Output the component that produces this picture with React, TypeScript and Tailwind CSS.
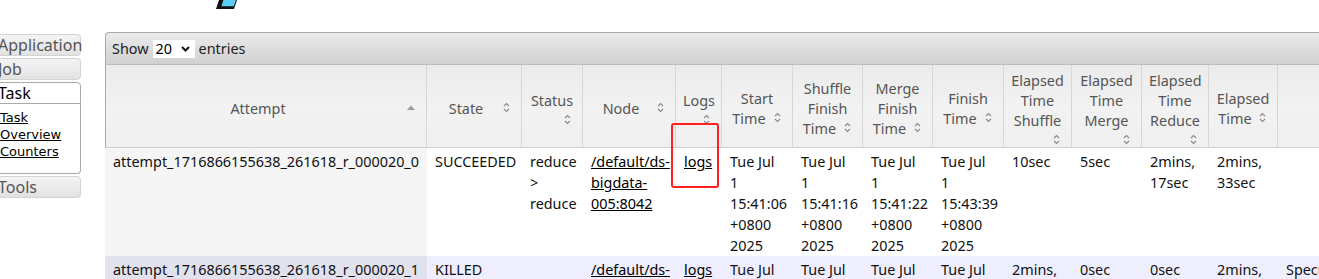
import React from "react";

type Col = { label: string; w: number; sort?: "asc" | "both" | "none" };

const cols: Col[] = [
    { label: "Attempt", w: 322, sort: "asc" },
    { label: "State", w: 95 },
    { label: "Status", w: 61 },
    { label: "Node", w: 93 },
    { label: "Logs", w: 46 },
    { label: "Start Time", w: 71 },
    { label: "Shuffle Finish Time", w: 70 },
    { label: "Merge Finish Time", w: 70 },
    { label: "Finish Time", w: 71 },
    { label: "Elapsed Time Shuffle", w: 68 },
    { label: "Elapsed Time Merge", w: 70 },
    { label: "Elapsed Time Reduce", w: 67 },
    { label: "Elapsed Time", w: 69 },
    { label: "Note", w: 420, sort: "none" },
];

const rows = [
    {
        attempt: "attempt_1716866155638_261618_r_000020_0",
        state: "SUCCEEDED",
        status: "reduce > reduce",
        node: "/default/ds-bigdata-005:8042",
        start: "Tue Jul 1 15:41:06 +0800 2025",
        shuffle: "Tue Jul 1 15:41:16 +0800 2025",
        merge: "Tue Jul 1 15:41:22 +0800 2025",
        finish: "Tue Jul 1 15:43:39 +0800 2025",
        eShuffle: "10sec",
        eMerge: "5sec",
        eReduce: "2mins, 17sec",
        elapsed: "2mins, 33sec",
        note: "",
    },
    {
        attempt: "attempt_1716866155638_261618_r_000020_1",
        state: "KILLED",
        status: "",
        node: "/default/ds-bigdata-011:8042",
        start: "Tue Jul 1 15:41:37 +0800 2025",
        shuffle: "Tue Jul 1 15:43:44 +0800 2025",
        merge: "Tue Jul 1 15:43:44 +0800 2025",
        finish: "Tue Jul 1 15:43:44 +0800 2025",
        eShuffle: "2mins, 7sec",
        eMerge: "0sec",
        eReduce: "0sec",
        elapsed: "2mins, 7sec",
        note: "Speculation: attempt_1716866155638_261618_r_000020_0 succeeded first!",
    },
];

const SortIcon = ({ kind }: { kind: "asc" | "both" }) => (
    <span className="float-right w-4 h-4 flex items-center justify-center">
        {kind === "asc" ? (
            <svg width="8" height="5" viewBox="0 0 8 5">
                <path d="M0 5 L4 0.5 L8 5 Z" fill="#9a9a9a" />
            </svg>
        ) : (
            <svg width="7" height="11" viewBox="0 0 7 11">
                <path d="M1 4 L3.5 1.5 L6 4" fill="none" stroke="#8a8a8a" strokeWidth="1.1" />
                <path d="M1 7 L3.5 9.5 L6 7" fill="none" stroke="#8a8a8a" strokeWidth="1.1" />
            </svg>
        )}
    </span>
);

const SideHead = ({ label, active }: { label: string; active?: boolean }) =>
    active ? (
        <div className="h-[22px] border border-[#aaaaaa] rounded-t-[4px] bg-white pl-[7px] text-[16px] leading-[20px] text-black">
            {label}
        </div>
    ) : (
        <div className="h-[22px] border border-[#d3d3d3] rounded-[4px] bg-gradient-to-b from-[#f4f4f4] to-[#e2e2e2] pl-[7px] text-[16px] leading-[20px] text-[#555555]">
            {label}
        </div>
    );

export default function App() {
    return (
        <div className="relative w-[1319px] h-[279px] overflow-hidden bg-white font-['Noto_Sans',sans-serif] text-[#222]">
            <div className="h-[32px]">
                <svg width="240" height="10" viewBox="0 0 240 10">
                    <path d="M219 0 L237 0 L234 9 L216 9 Z" fill="#111" />
                    <path d="M223.5 0 L236 0 L233.8 6.2 L221.3 6.2 Z" fill="#5ccdf5" />
                </svg>
            </div>
            <div className="flex">
                <div className="w-[91px] -ml-[10px] shrink-0 pt-[2px] flex flex-col gap-[2px]">
                    <SideHead label="Application" />
                    <SideHead label="Job" />
                    <div>
                        <SideHead label="Task" active />
                        <div className="h-[70px] border border-t-0 border-[#aaaaaa] rounded-b-[4px] bg-white pl-[9px] pt-[5px] font-['DejaVu_Sans',sans-serif] text-[13px] leading-[17px] text-black">
                            <a className="block underline">Task</a>
                            <a className="block underline">Overview</a>
                            <a className="block underline">Counters</a>
                        </div>
                    </div>
                    <SideHead label="Tools" />
                </div>
                <div className="ml-[24px] shrink-0 w-[1400px]">
                    <div className="h-[33px] border-t border-l border-b border-t-[#aaaaaa] border-l-[#aaaaaa] border-b-[#bdbdbd] rounded-tl-[4px] bg-gradient-to-b from-[#ebebeb] to-[#d0d0d0] flex items-center pt-[1px] pl-[6px] text-[14.4px] text-[#222]">
                        <span>Show</span>
                        <span className="ml-[4px] w-[42px] h-[18px] bg-white flex items-center pl-[3px] justify-between pr-[5px]">
                            <span className="text-black leading-[18px]">20</span>
                            <svg width="9" height="6" viewBox="0 0 9 6">
                                <path d="M1 1 L4.5 4.5 L8 1" fill="none" stroke="#111" strokeWidth="2" />
                            </svg>
                        </span>
                        <span className="ml-[4px]">entries</span>
                    </div>
                    <table className="table-fixed border-separate border-spacing-0 text-[14.4px]" style={{ width: 1593 }}>
                        <colgroup>
                            {cols.map((c, i) => (
                                <col key={i} style={{ width: c.w }} />
                            ))}
                        </colgroup>
                        <thead>
                            <tr>
                                {cols.map((c, i) => (
                                    <th
                                        key={i}
                                        className={`h-[83px] align-middle text-center font-normal leading-[20px] text-[#555555] px-[7px] pt-[6px] pb-0 border-r border-b border-r-[#d6d6d6] border-b-[#cfcfcf] bg-gradient-to-b from-[#ebebeb] via-[#f2f2f2] to-[#f0f0f0] ${i === 0 ? "border-l border-l-[#aaaaaa]" : ""}`}
                                    >
                                        {c.label}
                                        {c.sort !== "none" && <SortIcon kind={c.sort === "asc" ? "asc" : "both"} />}
                                    </th>
                                ))}
                            </tr>
                        </thead>
                        <tbody>
                            {rows.map((r, i) => {
                                const odd = i % 2 === 0;
                                const cell = `align-top px-[8px] pt-[3px] pb-0 leading-[21px] text-[#111] ${odd ? "bg-white" : "bg-[#eeeeff]"}`;
                                const first = `align-top px-[8px] pt-[3px] pb-0 leading-[21px] text-[#111] whitespace-nowrap ${odd ? "bg-[#f5f5f5]" : "bg-[#e2e2ee]"}`;
                                return (
                                    <tr key={i}>
                                        <td className={first}>{r.attempt}</td>
                                        <td className={cell}>{r.state}</td>
                                        <td className={cell}>{r.status}</td>
                                        <td className={cell}>
                                            <a className="underline text-black">{r.node}</a>
                                        </td>
                                        <td className={cell}>
                                            <a className="underline text-black">logs</a>
                                        </td>
                                        <td className={cell}>{r.start}</td>
                                        <td className={cell}>{r.shuffle}</td>
                                        <td className={cell}>{r.merge}</td>
                                        <td className={cell}>{r.finish}</td>
                                        <td className={cell}>{r.eShuffle}</td>
                                        <td className={cell}>{r.eMerge}</td>
                                        <td className={cell}>{r.eReduce}</td>
                                        <td className={cell}>{r.elapsed}</td>
                                        <td className={cell}>{r.note}</td>
                                    </tr>
                                );
                            })}
                        </tbody>
                    </table>
                </div>
            </div>
            <div className="absolute left-[671px] top-[123px] w-[48px] h-[65px] border-2 border-[#ff2020] rounded-[3px]" />
        </div>
    );
}
